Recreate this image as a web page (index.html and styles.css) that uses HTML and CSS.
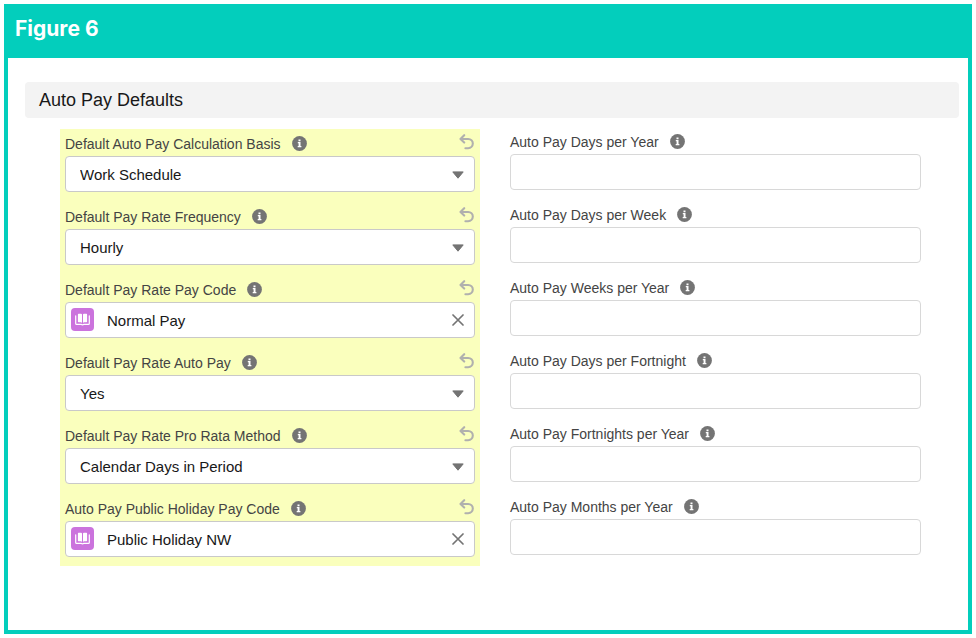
FILE: index.html
```html
<!DOCTYPE html>
<html lang="en">
<head>
<meta charset="utf-8">
<meta name="viewport" content="width=device-width, initial-scale=1">
<title>Auto Pay Defaults</title>
<link rel="stylesheet" href="styles.css">
</head>
<body>
<svg class="sprite" aria-hidden="true">
  <symbol id="info" viewBox="0 0 15 15">
    <circle cx="7.5" cy="7.5" r="7.4" fill="#747474"/>
    <path fill="#fff" d="M6.5 3.4h2v1.8h-2zM5.8 6.1h2.7v4h.9v1.2H5.7v-1.2h.9V7.3h-.8z"/>
  </symbol>
  <symbol id="undo" viewBox="0 0 16 16">
    <path fill="none" stroke="#b0b0ae" stroke-width="2.1" stroke-linecap="round" stroke-linejoin="round" d="M5.200 1.200 1.500 5 5.200 8.600M1.800 5h7.400a4.600 4.600 0 0 1 0 9.200H6.400"/>
  </symbol>
  <symbol id="down" viewBox="0 0 12 8">
    <path fill="#747474" stroke="#747474" stroke-linejoin="round" d="M.8.900h10.400L6 7.200z"/>
  </symbol>
  <symbol id="close" viewBox="0 0 12 12">
    <path fill="none" stroke="#747474" stroke-width="1.700" stroke-linecap="round" d="m1 1 10 10M11 1 1 11"/>
  </symbol>
  <symbol id="book" viewBox="0 0 23 23">
    <rect width="23" height="23" rx="4" fill="#cb73dd"/>
    <path fill="#fff" d="M7.600 5.800h2.500q.900 0 .900.900v8q-.400-.400-1.200-.400H7.600q-.700 0-.700-.700V6.500q0-.700.700-.700zM12.900 5.800h2.500q.700 0 .700.700v7.100q0 .700-.700.700h-2.200q-.800 0-1.200.400v-8q0-.900.900-.900z"/>
    <path fill="none" stroke="#fff" stroke-width="1.200" stroke-linecap="round" stroke-linejoin="round" d="M4.700 7.800v7.600q0 .900.900.900h4.400q1.500 1.100 3 0h4.400q.900 0 .900-.900V7.800"/>
  </symbol>
</svg>
<main class="figure">
  <h1 class="figure-title">Figure 6</h1>
  <section class="content">
    <h2 class="section-title">Auto Pay Defaults</h2>
    <form class="columns">
      <div class="column changed">
        <div class="field">
          <div class="caption"><label for="basis">Default Auto Pay Calculation Basis</label><button type="button" class="icon-button" aria-label="Help"><svg class="info"><use href="#info"/></svg></button><button type="button" class="icon-button undo-button" aria-label="Undo"><svg class="undo"><use href="#undo"/></svg></button></div>
          <div class="control"><select id="basis" class="box"><option>Work Schedule</option></select><svg class="down"><use href="#down"/></svg></div>
        </div>
        <div class="field">
          <div class="caption"><label for="frequency">Default Pay Rate Frequency</label><button type="button" class="icon-button" aria-label="Help"><svg class="info"><use href="#info"/></svg></button><button type="button" class="icon-button undo-button" aria-label="Undo"><svg class="undo"><use href="#undo"/></svg></button></div>
          <div class="control"><select id="frequency" class="box"><option>Hourly</option></select><svg class="down"><use href="#down"/></svg></div>
        </div>
        <div class="field">
          <div class="caption"><label for="paycode">Default Pay Rate Pay Code</label><button type="button" class="icon-button" aria-label="Help"><svg class="info"><use href="#info"/></svg></button><button type="button" class="icon-button undo-button" aria-label="Undo"><svg class="undo"><use href="#undo"/></svg></button></div>
          <div class="control"><svg class="book"><use href="#book"/></svg><input id="paycode" class="box lookup" type="text" value="Normal Pay"><button type="button" class="icon-button clear" aria-label="Clear"><svg class="close"><use href="#close"/></svg></button></div>
        </div>
        <div class="field">
          <div class="caption"><label for="autopay">Default Pay Rate Auto Pay</label><button type="button" class="icon-button" aria-label="Help"><svg class="info"><use href="#info"/></svg></button><button type="button" class="icon-button undo-button" aria-label="Undo"><svg class="undo"><use href="#undo"/></svg></button></div>
          <div class="control"><select id="autopay" class="box"><option>Yes</option></select><svg class="down"><use href="#down"/></svg></div>
        </div>
        <div class="field">
          <div class="caption"><label for="prorata">Default Pay Rate Pro Rata Method</label><button type="button" class="icon-button" aria-label="Help"><svg class="info"><use href="#info"/></svg></button><button type="button" class="icon-button undo-button" aria-label="Undo"><svg class="undo"><use href="#undo"/></svg></button></div>
          <div class="control"><select id="prorata" class="box"><option>Calendar Days in Period</option></select><svg class="down"><use href="#down"/></svg></div>
        </div>
        <div class="field">
          <div class="caption"><label for="holiday">Auto Pay Public Holiday Pay Code</label><button type="button" class="icon-button" aria-label="Help"><svg class="info"><use href="#info"/></svg></button><button type="button" class="icon-button undo-button" aria-label="Undo"><svg class="undo"><use href="#undo"/></svg></button></div>
          <div class="control"><svg class="book"><use href="#book"/></svg><input id="holiday" class="box lookup" type="text" value="Public Holiday NW"><button type="button" class="icon-button clear" aria-label="Clear"><svg class="close"><use href="#close"/></svg></button></div>
        </div>
      </div>
      <div class="column">
        <div class="field">
          <div class="caption"><label for="days-year">Auto Pay Days per Year</label><button type="button" class="icon-button" aria-label="Help"><svg class="info"><use href="#info"/></svg></button></div>
          <div class="control"><input id="days-year" class="box" type="text"></div>
        </div>
        <div class="field">
          <div class="caption"><label for="days-week">Auto Pay Days per Week</label><button type="button" class="icon-button" aria-label="Help"><svg class="info"><use href="#info"/></svg></button></div>
          <div class="control"><input id="days-week" class="box" type="text"></div>
        </div>
        <div class="field">
          <div class="caption"><label for="weeks-year">Auto Pay Weeks per Year</label><button type="button" class="icon-button" aria-label="Help"><svg class="info"><use href="#info"/></svg></button></div>
          <div class="control"><input id="weeks-year" class="box" type="text"></div>
        </div>
        <div class="field">
          <div class="caption"><label for="days-fortnight">Auto Pay Days per Fortnight</label><button type="button" class="icon-button" aria-label="Help"><svg class="info"><use href="#info"/></svg></button></div>
          <div class="control"><input id="days-fortnight" class="box" type="text"></div>
        </div>
        <div class="field">
          <div class="caption"><label for="fortnights-year">Auto Pay Fortnights per Year</label><button type="button" class="icon-button" aria-label="Help"><svg class="info"><use href="#info"/></svg></button></div>
          <div class="control"><input id="fortnights-year" class="box" type="text"></div>
        </div>
        <div class="field">
          <div class="caption"><label for="months-year">Auto Pay Months per Year</label><button type="button" class="icon-button" aria-label="Help"><svg class="info"><use href="#info"/></svg></button></div>
          <div class="control"><input id="months-year" class="box" type="text"></div>
        </div>
      </div>
    </form>
  </section>
</main>
</body>
</html>
```
FILE: styles.css
```css
* {
  box-sizing: border-box;
}

body {
  margin: 0;
  padding: 4px;
  min-height: 100vh;
  display: flex;
  background: #fff;
  color: #181818;
  font-family: "Liberation Sans", Arial, sans-serif;
  font-size: 15px;
}

.sprite {
  position: absolute;
  width: 0;
  height: 0;
}

.figure {
  flex: 1;
  border: 4px solid #03cebc;
}

.figure-title {
  margin: 0;
  padding: 8px 7px 16px;
  background: #03cebc;
  color: #fff;
  font-family: Inter, sans-serif;
  font-size: 21px;
  font-weight: 700;
  line-height: 26px;
}

.content {
  padding: 24px 9px 24px 17px;
}

.section-title {
  margin: 0;
  padding: 6px 14px;
  border-radius: 4px;
  background: #f3f3f3;
  font-size: 18px;
  font-weight: 400;
  line-height: 24px;
}

.columns {
  display: grid;
  grid-template-columns: 420fr 411fr;
  align-items: start;
  gap: 30px;
  margin: 9px 38px 0 35px;
}

.column {
  display: grid;
  gap: 10px;
}

.changed {
  margin-top: 2px;
  padding: 0 5px 9px;
  background: #faffbd;
}

.caption {
  display: flex;
  align-items: center;
  gap: 11px;
  height: 27px;
  padding-top: 2px;
  color: #444;
  font-size: 14px;
  line-height: 20px;
}

.control {
  position: relative;
}

.box {
  display: block;
  width: 100%;
  height: 36px;
  margin: 0;
  padding: 0 14px;
  border: 1px solid #d8d8d8;
  border-radius: 4px;
  appearance: none;
  background: #fff;
  color: #181818;
  font: inherit;
}

.changed .box {
  border-color: #c9c9c9;
}

.changed .lookup {
  padding: 0 41px;
}

.icon-button {
  display: flex;
  padding: 0;
  border: 0;
  background: none;
}

.undo-button {
  margin-left: auto;
  padding-bottom: 3px;
}

.info {
  width: 15px;
  height: 15px;
}

.undo {
  width: 16px;
  height: 16px;
}

.down {
  position: absolute;
  top: 15px;
  right: 11px;
  width: 12px;
  height: 8px;
  pointer-events: none;
}

.clear {
  position: absolute;
  top: 12px;
  right: 11px;
}

.close {
  width: 12px;
  height: 12px;
}

.book {
  position: absolute;
  top: 6px;
  left: 6px;
  width: 23px;
  height: 23px;
}
```
